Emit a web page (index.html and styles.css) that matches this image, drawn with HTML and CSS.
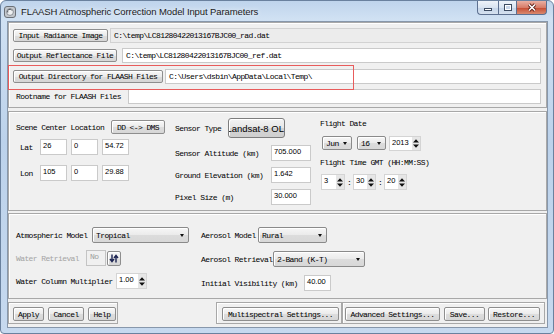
FILE: index.html
```html
<!DOCTYPE html>
<html lang="en">
<head>
    <meta charset="UTF-8">
    <meta name="viewport" content="width=device-width, initial-scale=1.0">
    <title>FLAASH Atmospheric Correction Model Input Parameters</title>
    <link rel="stylesheet" href="styles.css">
</head>
<body>
    <div class="window">
        <div class="titlebar">
            <svg class="app-icon" width="12" height="12" viewBox="0 0 12 12">
                <rect x="0.5" y="0.5" width="11" height="11" rx="2.5" fill="#c3c7cc" stroke="#6b7077"/>
                <circle cx="6" cy="6" r="3.4" fill="#eef0f2" stroke="#7a7f86" stroke-width="0.8"/>
                <path d="M3.8 6.5 A2.3 2.3 0 0 1 8 4.6" fill="none" stroke="#4d5259" stroke-width="1"/>
            </svg>
            <span class="title">FLAASH Atmospheric Correction Model Input Parameters</span>
            <div class="controls">
                <div class="ctl min"><i></i></div>
                <div class="ctl max"><i></i></div>
                <div class="ctl close">
                    <svg width="12" height="9" viewBox="0 0 12 9">
                        <path d="M3 1.5l6 6M9 1.5l-6 6" stroke="#5a1d14" stroke-width="3.2" fill="none"/>
                        <path d="M3 1.5l6 6M9 1.5l-6 6" stroke="#fff" stroke-width="1.6" fill="none"/>
                    </svg>
                </div>
            </div>
        </div>

        <div class="client">
            <!-- file selection -->
            <div class="panel files">
                <div class="row">
                    <button class="btn b-rad">Input Radiance Image</button>
                    <div class="field path readonly m2">C:\temp\LC81280422013167BJC00_rad.dat</div>
                </div>
                <div class="row">
                    <button class="btn b-ref">Output Reflectance File</button>
                    <div class="field path m5">C:\temp\LC81280422013167BJC00_ref.dat</div>
                </div>
                <div class="row dir">
                    <button class="btn b-dir">Output Directory for FLAASH Files</button>
                    <div class="field path m2">C:\Users\dsbin\AppData\Local\Temp\</div>
                </div>
                <div class="row">
                    <span class="root-label">Rootname for FLAASH Files</span>
                    <div class="field path"></div>
                </div>
                <div class="mark"></div>
            </div>

            <!-- scene / sensor / flight -->
            <div class="panel scene">
                <div class="col col-loc">
                    <div class="line scl">
                        <span class="lbl-scl">Scene Center Location</span>
                        <button class="btn b-dms">DD &lt;-&gt; DMS</button>
                    </div>
                    <div class="line latlon">
                        <span class="ll-label">Lat</span>
                        <div class="field num nf">26</div>
                        <div class="field num nf">0</div>
                        <div class="field num nf">54.72</div>
                    </div>
                    <div class="line latlon lon">
                        <span class="ll-label">Lon</span>
                        <div class="field num nf">105</div>
                        <div class="field num nf">0</div>
                        <div class="field num nf">29.88</div>
                    </div>
                </div>

                <div class="col col-sensor">
                    <div class="line sensor-type">
                        <span class="lbl-st">Sensor Type</span>
                        <button class="btn b-sensor"><span>Landsat-8 OLI</span></button>
                    </div>
                    <div class="line param first">
                        <span class="lbl-param">Sensor Altitude (km)</span>
                        <div class="field num pf">705.000</div>
                    </div>
                    <div class="line param">
                        <span class="lbl-param">Ground Elevation (km)</span>
                        <div class="field num pf">1.642</div>
                    </div>
                    <div class="line param">
                        <span class="lbl-param">Pixel Size (m)</span>
                        <div class="field num pf">30.000</div>
                    </div>
                </div>

                <div class="col col-flight">
                    <div class="flabel">Flight Date</div>
                    <div class="line date-row">
                        <div class="combo c-month">Jun<span class="arrow"></span></div>
                        <div class="combo c-day">16<span class="arrow"></span></div>
                        <div class="spin s-year">
                            <span class="val">2013</span>
                            <span class="arrows"><svg width="6" height="9" viewBox="0 0 6 9"><path d="M0 3.6L3 0.3 6 3.6z M0 5.4l3 3.3 3-3.3z" fill="#111"/></svg></span>
                        </div>
                    </div>
                    <div class="flabel time">Flight Time GMT (HH:MM:SS)</div>
                    <div class="line time-row">
                        <div class="spin s-hour">
                            <span class="val">3</span>
                            <span class="arrows"><svg width="6" height="9" viewBox="0 0 6 9"><path d="M0 3.6L3 0.3 6 3.6z M0 5.4l3 3.3 3-3.3z" fill="#111"/></svg></span>
                        </div>
                        <span class="colon">:</span>
                        <div class="spin s-min">
                            <span class="val">30</span>
                            <span class="arrows"><svg width="6" height="9" viewBox="0 0 6 9"><path d="M0 3.6L3 0.3 6 3.6z M0 5.4l3 3.3 3-3.3z" fill="#111"/></svg></span>
                        </div>
                        <span class="colon">:</span>
                        <div class="spin s-min">
                            <span class="val">20</span>
                            <span class="arrows"><svg width="6" height="9" viewBox="0 0 6 9"><path d="M0 3.6L3 0.3 6 3.6z M0 5.4l3 3.3 3-3.3z" fill="#111"/></svg></span>
                        </div>
                    </div>
                </div>
            </div>

            <!-- atmosphere / aerosol -->
            <div class="panel atmos">
                <div class="col col-atm-left">
                    <div class="line arow">
                        <span class="lbl-atm">Atmospheric Model</span>
                        <div class="combo c-atm">Tropical<span class="arrow"></span></div>
                    </div>
                    <div class="line arow">
                        <span class="lbl-wr disabled">Water Retrieval</span>
                        <div class="field f-no">No</div>
                        <button class="btn b-toggle">
                            <svg width="10" height="9" viewBox="0 0 10 9">
                                <path d="M3 0.5v6.5M1 5l2 2.6 2-2.6" stroke="#1c2452" stroke-width="1.4" fill="none"/>
                                <path d="M7 8.5V2M5 4l2-2.6 2 2.6" stroke="#1c2452" stroke-width="1.4" fill="none"/>
                            </svg>
                        </button>
                    </div>
                    <div class="line arow">
                        <span class="lbl-wcm">Water Column Multiplier</span>
                        <div class="spin s-wcm">
                            <span class="val">1.00</span>
                            <span class="arrows"><svg width="6" height="9" viewBox="0 0 6 9"><path d="M0 3.6L3 0.3 6 3.6z M0 5.4l3 3.3 3-3.3z" fill="#111"/></svg></span>
                        </div>
                    </div>
                </div>
                <div class="col col-atm-right">
                    <div class="line arow">
                        <span class="lbl-am">Aerosol Model</span>
                        <div class="combo c-aer">Rural<span class="arrow"></span></div>
                    </div>
                    <div class="line arow">
                        <span class="lbl-ar">Aerosol Retrieval</span>
                        <div class="combo c-ret">2-Band (K-T)<span class="arrow"></span></div>
                    </div>
                    <div class="line arow">
                        <span class="lbl-iv">Initial Visibility (km)</span>
                        <div class="field num f-vis">40.00</div>
                    </div>
                </div>
            </div>

            <!-- action buttons -->
            <div class="bottom">
                <div class="group actions">
                    <button class="btn b-apply">Apply</button>
                    <button class="btn b-cancel">Cancel</button>
                    <button class="btn b-help">Help</button>
                </div>
                <div class="group multi">
                    <button class="btn b-multi">Multispectral Settings...</button>
                </div>
                <div class="group misc">
                    <button class="btn b-adv">Advanced Settings...</button>
                    <button class="btn b-save">Save...</button>
                    <button class="btn b-restore">Restore...</button>
                </div>
            </div>
        </div>
    </div>
</body>
</html>
```

FILE: styles.css
```css
* {
    box-sizing: border-box;
}
body {
    margin: 0;
    width: 554px;
    height: 334px;
    overflow: hidden;
    background: #fff;
    font-family: "Liberation Mono", monospace;
    font-size: 8px;
    letter-spacing: -0.6px;
    color: #000;
}
.window {
    width: 554px;
    height: 334px;
    display: flex;
    flex-direction: column;
    padding: 0 5px 5px 6px;
    border: 1px solid #6a819e;
    border-radius: 6px 6px 4px 4px;
    background: linear-gradient(#bfd4ec, #d0e1f3 18px, #bcd2eb 140px, #c6d9ef);
}

/* title bar */
.titlebar {
    height: 20px;
    margin: 0 -5px 0 -6px;
    padding-left: 3px;
    display: flex;
    align-items: center;
}
.app-icon {
    display: block;
    margin-top: 1px;
}
.title {
    margin-left: 5px;
    font-family: "Liberation Sans", sans-serif;
    font-size: 9.5px;
    letter-spacing: -0.1px;
    color: #1b1b1b;
    text-shadow: 0 0 5px rgba(255,255,255,0.9);
}
.controls {
    display: flex;
    align-self: flex-start;
    margin-left: auto;
    margin-right: 6px;
}
.ctl {
    height: 14px;
    border: 1px solid #5d7090;
    border-top: none;
}
.ctl.min {
    width: 21px;
    border-right: none;
    border-radius: 0 0 0 4px;
    background: linear-gradient(#eef3f9, #d9e4f1 50%, #c4d4e8 51%, #d6e2f0);
}
.ctl.max {
    width: 18px;
    border-right: none;
    background: linear-gradient(#eef3f9, #d9e4f1 50%, #c4d4e8 51%, #d6e2f0);
}
.ctl.close {
    width: 31px;
    border-radius: 0 0 4px 0;
    background: linear-gradient(#eab0a3, #d77c68 50%, #c54a30 51%, #d98a70);
    display: flex;
    align-items: center;
    justify-content: center;
}
.ctl.min i {
    display: block;
    width: 8px;
    height: 3px;
    margin: 7px auto 0;
    background: #fff;
    border: 1px solid #3d4c62;
}
.ctl.max i {
    display: block;
    width: 8px;
    height: 7px;
    margin: 3px auto 0;
    background: #c9d7ea;
    border: 1px solid #3d4c62;
    box-shadow: inset 0 0 0 1px #fff;
}

/* client area */
.client {
    height: 307px;
    display: flex;
    flex-direction: column;
    background: #f0f0f0;
    border: 1px solid #8797ab;
}
.panel {
    position: relative;
    border: 1px solid #a8a8a8;
    box-shadow: inset 1px 1px 0 #fff;
}
.line {
    display: flex;
    align-items: center;
}
.col {
    display: flex;
    flex-direction: column;
}
.disabled {
    color: #a4a4a4;
}

/* controls */
.btn {
    font: inherit;
    letter-spacing: inherit;
    color: #000;
    height: 13px;
    padding: 0;
    display: flex;
    align-items: center;
    justify-content: center;
    white-space: nowrap;
    overflow: hidden;
    border: 1px solid #8e8e8e;
    border-radius: 2px;
    background: linear-gradient(#f8f8f8, #ebebeb 50%, #dddddd 51%, #d6d6d6);
    box-shadow: inset 1px 1px 0 #fff;
}
.field {
    height: 15px;
    display: flex;
    align-items: center;
    padding-left: 3px;
    white-space: nowrap;
    overflow: hidden;
    background: #fff;
    border: 1px solid #cacaca;
}
.field.readonly {
    background: #ececec;
    border-color: #d2d2d2;
}
.field.num {
    height: 16px;
    align-items: flex-start;
    padding: 1px 0 0 2px;
    font-family: "Liberation Sans", sans-serif;
    font-size: 7.5px;
    letter-spacing: 0;
}
.combo {
    height: 14px;
    display: flex;
    align-items: center;
    padding-left: 3px;
    white-space: nowrap;
    border: 1px solid #8a8a8a;
    border-radius: 2px;
    background: linear-gradient(#f6f6f6, #ebebeb 50%, #dcdcdc 51%, #d8d8d8);
    box-shadow: inset 1px 1px 0 #fff;
}
.combo .arrow {
    margin-left: auto;
    margin-right: 4px;
    width: 0;
    height: 0;
    border-left: 2.5px solid transparent;
    border-right: 2.5px solid transparent;
    border-top: 3px solid #111;
}
.spin {
    height: 16px;
    display: flex;
    background: #fff;
    border: 1px solid #d4d4d4;
}
.spin .val {
    flex: 1;
    padding: 1px 0 0 2px;
    font-family: "Liberation Sans", sans-serif;
    font-size: 7.5px;
    letter-spacing: 0;
}
.spin .arrows {
    width: 8px;
    display: flex;
    align-items: center;
    justify-content: center;
    background: #e6e6e6;
}

/* file rows */
.files {
    height: 86px;
    padding: 5px 5px 0 4px;
}
.row {
    height: 15px;
    display: flex;
    align-items: center;
}
.row + .row {
    margin-top: 5px;
}
.row.dir {
    margin-top: 6px;
}
.field.path {
    flex: 1;
}
.m2 {
    margin-left: 2px;
}
.m5 {
    margin-left: 5px;
}
.b-rad {
    width: 95px;
}
.b-ref {
    width: 104px;
}
.b-dir {
    width: 150px;
}
.root-label {
    width: 115px;
    padding-left: 3px;
}
.mark {
    position: absolute;
    left: -1px;
    top: 42px;
    width: 346px;
    height: 25px;
    border: 1px solid #e85c5c;
}

/* scene panel */
.scene {
    margin-top: 3px;
    height: 100px;
    display: flex;
    padding-left: 7px;
}
.col-loc {
    width: 159px;
}
.col-sensor {
    width: 145px;
}
.col-flight {
    flex: 1;
}
.scl {
    margin-top: 8px;
    height: 14px;
}
.lbl-scl {
    width: 95px;
}
.b-dms {
    width: 54px;
    height: 14px;
}
.latlon {
    height: 16px;
    margin-top: 5px;
}
.latlon.lon {
    margin-top: 10px;
}
.ll-label {
    width: 24px;
    padding-left: 4px;
}
.nf {
    width: 27px;
}
.nf + .nf {
    margin-left: 4px;
}
.sensor-type {
    margin-top: 6px;
    height: 20px;
}
.lbl-st {
    width: 53px;
}
.b-sensor {
    width: 57px;
    height: 20px;
    font-family: "Liberation Sans", sans-serif;
    font-size: 9.5px;
    letter-spacing: 0;
    border-color: #7d7d7d;
    border-radius: 3px;
    background: linear-gradient(#f4f4f4, #e6e6e6 50%, #d4d4d4 51%, #cfcfcf);
}
.param {
    height: 16px;
    margin-top: 6px;
}
.param.first {
    margin-top: 7px;
}
.lbl-param {
    width: 96px;
}
.pf {
    width: 40px;
}
.flabel {
    margin-top: 7px;
    height: 10px;
    line-height: 10px;
}
.flabel.time {
    margin-top: 8px;
}
.date-row {
    margin-top: 7px;
    height: 14px;
    padding-left: 2px;
}
.c-month {
    width: 30px;
}
.c-day {
    width: 29px;
    margin-left: 5px;
}
.s-year {
    width: 32px;
    height: 15px;
    margin-left: 3px;
}
.time-row {
    margin-top: 6px;
    height: 16px;
    padding-left: 1px;
}
.s-hour {
    width: 24px;
}
.s-min {
    width: 23px;
}
.colon {
    width: 8px;
    text-align: center;
}

/* atmosphere panel */
.atmos {
    margin-top: 2px;
    height: 86px;
    display: flex;
    padding: 13px 0 0 7px;
}
.col-atm-left {
    width: 185px;
    gap: 7px;
}
.col-atm-right {
    gap: 8px;
}
.arow {
    height: 16px;
}
.arow .combo {
    height: 16px;
}
.lbl-atm {
    width: 76px;
}
.c-atm {
    width: 97px;
}
.lbl-wr {
    width: 70px;
}
.f-no {
    width: 20px;
    height: 16px;
    align-items: flex-start;
    padding-top: 1px;
    color: #9c9c9c;
    background: #f0f0f0;
    border-color: #c4c4c4;
}
.b-toggle {
    width: 14px;
    height: 15px;
    margin-left: 1px;
}
.lbl-wcm {
    width: 100px;
}
.s-wcm {
    width: 31px;
}
.lbl-am {
    width: 57px;
}
.c-aer {
    width: 69px;
}
.lbl-ar {
    width: 72px;
}
.c-ret {
    width: 92px;
}
.lbl-iv {
    width: 103px;
}
.f-vis {
    width: 27px;
}

/* bottom buttons */
.bottom {
    margin-top: 3px;
    height: 22px;
    display: flex;
}
.group {
    height: 22px;
    display: flex;
    align-items: flex-start;
    padding: 4px 0 0 4px;
    border: 1px solid #a8a8a8;
    box-shadow: inset 1px 1px 0 #fff;
}
.group .btn {
    height: 14px;
}
.actions {
    width: 110px;
    gap: 4px;
}
.multi {
    width: 126px;
    margin-left: auto;
    padding-left: 5px;
}
.misc {
    width: 203px;
    margin-right: 2px;
    padding-left: 2px;
}
.b-apply {
    width: 31px;
}
.b-cancel {
    width: 36px;
}
.b-help {
    width: 28px;
}
.b-multi {
    width: 117px;
}
.b-adv {
    width: 95px;
}
.b-save {
    width: 41px;
    margin-left: 4px;
}
.b-restore {
    width: 52px;
    margin-left: 3px;
}
```
